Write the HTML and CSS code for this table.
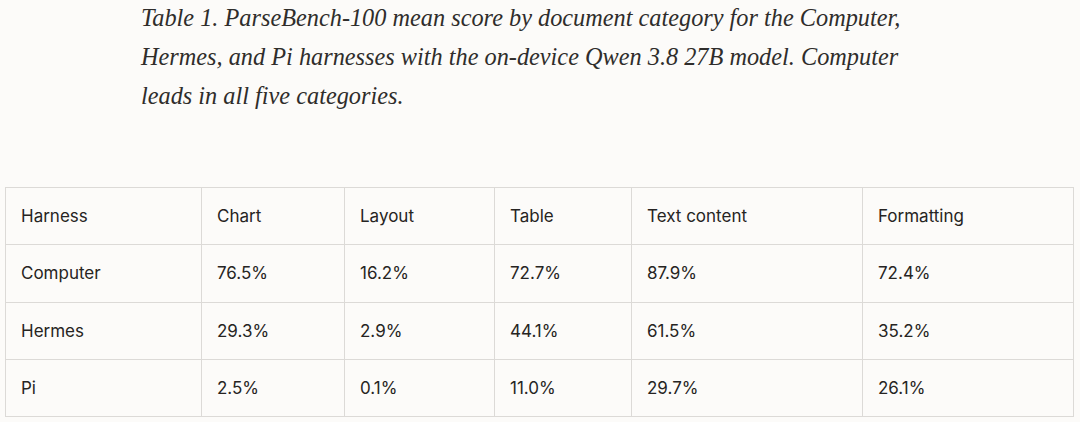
FILE: index.html
```html
<!DOCTYPE html>
<html>
<head>
<meta charset="utf-8">
<link rel="stylesheet" href="styles.css">
</head>
<body>
<figure class="fig">
  <figcaption class="caption">Table 1. ParseBench-100 mean score by document category for the Computer,<br>Hermes, and Pi harnesses with the on-device Qwen 3.8 27B model. Computer<br>leads in all five categories.</figcaption>
  <table class="tbl">
    <colgroup>
      <col class="c1"><col class="c2"><col class="c3"><col class="c4"><col class="c5"><col class="c6">
    </colgroup>
    <tr><td>Harness</td><td>Chart</td><td>Layout</td><td>Table</td><td>Text content</td><td>Formatting</td></tr>
    <tr><td>Computer</td><td>76.5%</td><td>16.2%</td><td>72.7%</td><td>87.9%</td><td>72.4%</td></tr>
    <tr><td>Hermes</td><td>29.3%</td><td>2.9%</td><td>44.1%</td><td>61.5%</td><td>35.2%</td></tr>
    <tr><td>Pi</td><td>2.5%</td><td>0.1%</td><td>11.0%</td><td>29.7%</td><td>26.1%</td></tr>
  </table>
</figure>
</body>
</html>
```
FILE: styles.css
```css
html, body {
  margin: 0;
  padding: 0;
  background: #fcfbf9;
}
.fig {
  margin: 0;
  padding: 0 0 0 5px;
}
.caption {
  margin: 0 0 0 136px;
  padding-top: 0;
  font-family: "Liberation Serif", serif;
  font-style: italic;
  font-size: 24.3px;
  line-height: 39px;
  color: #2f2d2b;
  position: relative;
  top: -2px;
}
.tbl {
  margin-top: 70px;
  border-collapse: collapse;
  table-layout: fixed;
  width: 1068px;
  font-family: "Inter", "Noto Sans", sans-serif;
  font-size: 17px;
  color: #262422;
}
.c1 { width: 196px; }
.c2 { width: 143px; }
.c3 { width: 150px; }
.c4 { width: 137px; }
.c5 { width: 231px; }
.c6 { width: 211px; }
.tbl td {
  border: 1px solid #dcdad7;
  height: 57.3px;
  padding: 0 0 0 15px;
  box-sizing: border-box;
  vertical-align: middle;
}
```
